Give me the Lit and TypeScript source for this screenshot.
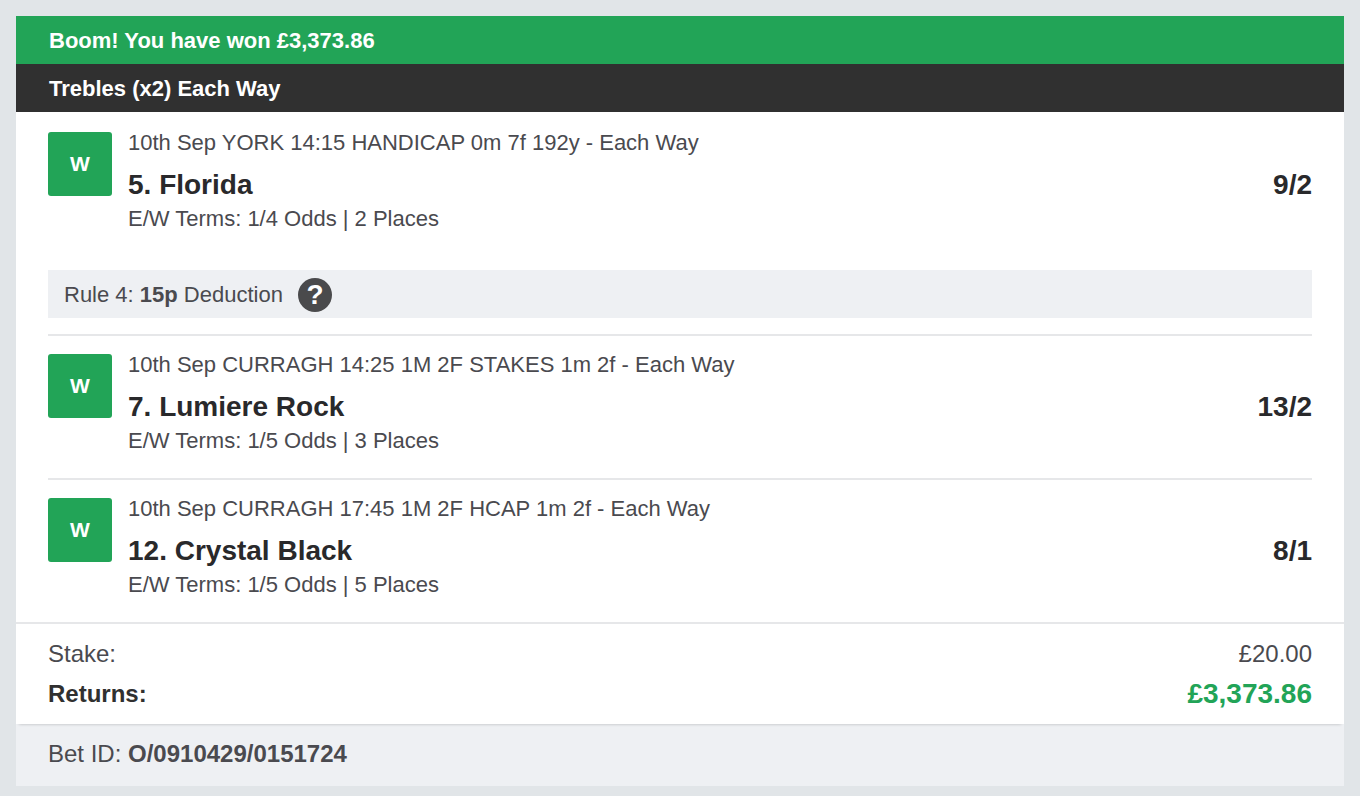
import { LitElement, html, css } from 'lit';
import { customElement } from 'lit/decorators.js';

interface Leg {
  meta: string;
  name: string;
  odds: string;
  terms: string;
  rule4?: string;
}

const LEGS: Leg[] = [
  {
    meta: '10th Sep YORK 14:15 HANDICAP 0m 7f 192y - Each Way',
    name: '5. Florida',
    odds: '9/2',
    terms: 'E/W Terms: 1/4 Odds | 2 Places',
    rule4: '15p',
  },
  {
    meta: '10th Sep CURRAGH 14:25 1M 2F STAKES 1m 2f - Each Way',
    name: '7. Lumiere Rock',
    odds: '13/2',
    terms: 'E/W Terms: 1/5 Odds | 3 Places',
  },
  {
    meta: '10th Sep CURRAGH 17:45 1M 2F HCAP 1m 2f - Each Way',
    name: '12. Crystal Black',
    odds: '8/1',
    terms: 'E/W Terms: 1/5 Odds | 5 Places',
  },
];

@customElement('app-root')
export class AppRoot extends LitElement {
  static styles = css`
    :host {
      display: block;
      min-height: 796px;
      box-sizing: border-box;
      padding: 16px;
      background: #e1e5e8;
      font-family: 'Liberation Sans', Arial, sans-serif;
      color: #4a4a4f;
      font-size: 22px;
    }
    .banner {
      height: 48px;
      box-sizing: border-box;
      padding: 2px 0 0 33px;
      display: flex;
      align-items: center;
      font-size: 22px;
      font-weight: bold;
      color: #fff;
    }
    .won {
      background: #22a457;
    }
    .type {
      background: #303030;
    }
    .legs {
      background: #fff;
      padding: 0 32px;
    }
    .leg {
      border-top: 2px solid #e6e7e9;
      padding: 18px 0 0;
      box-sizing: border-box;
      height: 144px;
    }
    .leg:first-child {
      border-top: none;
      padding-top: 20px;
      height: 158px;
    }
    .leg-body {
      display: flex;
      gap: 16px;
    }
    .status {
      flex: none;
      width: 64px;
      height: 64px;
      border-radius: 3px;
      background: #22a457;
      color: #fff;
      font-weight: bold;
      font-size: 21px;
      display: flex;
      align-items: center;
      justify-content: center;
    }
    .info {
      flex: 1;
      margin-top: -1px;
    }
    .meta,
    .terms {
      line-height: 24px;
    }
    .selection {
      display: flex;
      justify-content: space-between;
      align-items: center;
      height: 32px;
      margin: 14px 0 6px;
      font-size: 28px;
      font-weight: bold;
      color: #29292b;
    }
    .rule4 {
      height: 48px;
      box-sizing: border-box;
      margin-bottom: 16px;
      padding: 2px 0 0 16px;
      display: flex;
      align-items: center;
      gap: 15px;
      background: #eef0f3;
    }
    .help {
      width: 34px;
      height: 34px;
      border-radius: 50%;
      background: #4a4a4c;
      color: #fff;
      font-size: 28px;
      font-weight: bold;
      display: flex;
      align-items: center;
      justify-content: center;
    }
    .totals {
      background: #fff;
      border-top: 2px solid #e6e7e9;
      padding: 10px 32px 0;
      height: 102px;
      box-sizing: border-box;
      box-shadow: 0 3px 3px -3px rgba(0, 0, 0, 0.25);
      position: relative;
    }
    .total-row {
      display: flex;
      justify-content: space-between;
      align-items: center;
      height: 40px;
      font-size: 24px;
    }
    .returns {
      font-weight: bold;
      color: #303030;
    }
    .returns .amount {
      font-size: 28px;
      color: #22a457;
    }
    .bet-id {
      height: 62px;
      box-sizing: border-box;
      padding: 0 0 2px 32px;
      display: flex;
      align-items: center;
      background: #eef0f3;
      font-size: 24px;
      white-space: pre;
    }
  `;

  renderLeg(leg: Leg) {
    return html`
      <div class="leg">
        <div class="leg-body">
          <div class="status">W</div>
          <div class="info">
            <div class="meta">${leg.meta}</div>
            <div class="selection">
              <span>${leg.name}</span>
              <span>${leg.odds}</span>
            </div>
            <div class="terms">${leg.terms}</div>
          </div>
        </div>
      </div>
      ${leg.rule4
        ? html`<div class="rule4">
            <span>Rule 4: <b>${leg.rule4}</b> Deduction</span>
            <span class="help">?</span>
          </div>`
        : ''}
    `;
  }

  render() {
    return html`
      <div class="banner won">Boom! You have won £3,373.86</div>
      <div class="banner type">Trebles (x2) Each Way</div>
      <div class="legs">${LEGS.map((leg) => this.renderLeg(leg))}</div>
      <div class="totals">
        <div class="total-row">
          <span>Stake:</span>
          <span>£20.00</span>
        </div>
        <div class="total-row returns">
          <span>Returns:</span>
          <span class="amount">£3,373.86</span>
        </div>
      </div>
      <div class="bet-id">Bet ID: <b>O/0910429/0151724</b></div>
    `;
  }
}
